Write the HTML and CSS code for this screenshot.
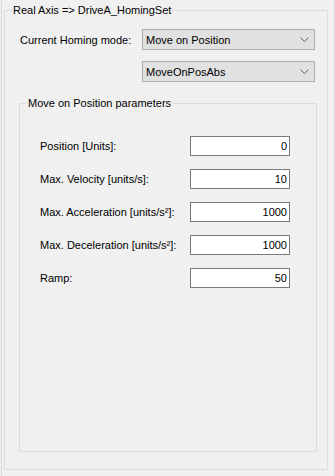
FILE: index.html
```html
<!DOCTYPE html>
<html>
<head>
<meta charset="utf-8">
<link rel="stylesheet" href="styles.css">
</head>
<body>
<div class="panel">
  <fieldset class="group outer">
    <legend class="legend">Real Axis =&gt; DriveA_HomingSet</legend>
    <div class="mode-row">
      <span class="mode-label">Current Homing mode:</span>
      <div class="combo">
        <span>Move on Position</span>
        <svg class="chev" width="9" height="5" viewBox="0 0 9 5"><path d="M0.5 0.5 L4.5 4.5 L8.5 0.5" fill="none" stroke="#606060" stroke-width="1"/></svg>
      </div>
    </div>
    <div class="mode-row second">
      <div class="combo">
        <span>MoveOnPosAbs</span>
        <svg class="chev" width="9" height="5" viewBox="0 0 9 5"><path d="M0.5 0.5 L4.5 4.5 L8.5 0.5" fill="none" stroke="#606060" stroke-width="1"/></svg>
      </div>
    </div>
    <fieldset class="group inner">
      <legend class="legend">Move on Position parameters</legend>
      <div class="params">
        <span class="plabel">Position [Units]:</span><div class="tbox">0</div>
        <span class="plabel">Max. Velocity [units/s]:</span><div class="tbox">10</div>
        <span class="plabel">Max. Acceleration [units/s²]:</span><div class="tbox">1000</div>
        <span class="plabel">Max. Deceleration [units/s²]:</span><div class="tbox">1000</div>
        <span class="plabel">Ramp:</span><div class="tbox">50</div>
      </div>
    </fieldset>
  </fieldset>
</div>
</body>
</html>
```

FILE: styles.css
```css
html, body {
  margin: 0;
  padding: 0;
  background: #f0f0f0;
}
body {
  font-family: "Liberation Sans", Arial, sans-serif;
  font-size: 11px;
  color: #000;
}
.panel {
  box-sizing: border-box;
  height: 476px;
  border-left: 1px solid #dadada;
  border-right: 1px solid #dadada;
  margin-left: 1px;
  width: 334px;
  padding: 4px 6px 0 2px;
}
.group {
  margin: 0;
  border: 1px solid #dcdcdc;
  min-width: 0;
}
.legend {
  margin-left: 7px;
  padding: 0 1px;
  line-height: 13px;
  height: 13px;
}
.outer {
  height: 466px;
  box-sizing: border-box;
  padding: 0;
}
.mode-row {
  display: flex;
  align-items: center;
  margin-top: 12px;
  padding-left: 15px;
}
.mode-row.second {
  margin-top: 11px;
  padding-left: 137px;
}
.mode-label {
  width: 122px;
}
.combo {
  box-sizing: border-box;
  width: 173px;
  height: 21px;
  border: 1px solid #adadad;
  background: #e1e1e1;
  display: flex;
  align-items: center;
  justify-content: space-between;
  padding: 0 5px 0 3px;
}
.inner {
  margin: 15px 0 0 14px;
  width: 298px;
  height: 355px;
  box-sizing: border-box;
  padding: 0;
}
.params {
  display: grid;
  grid-template-columns: 150px 100px;
  row-gap: 13px;
  align-items: center;
  padding: 26px 0 0 20px;
}
.tbox {
  box-sizing: border-box;
  height: 20px;
  border: 1px solid #7a7a7a;
  background: #fff;
  text-align: right;
  padding: 0 2px;
  line-height: 18px;
}
```
